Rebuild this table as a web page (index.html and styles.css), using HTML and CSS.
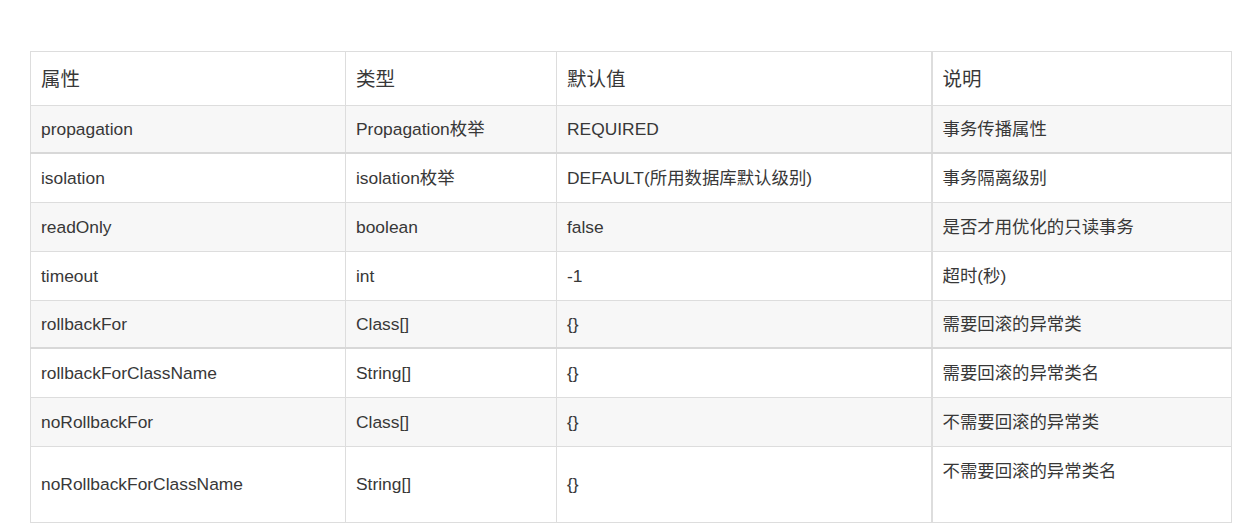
FILE: index.html
```html
<!DOCTYPE html>
<html lang="zh-CN">
<head>
<meta charset="utf-8">
<title>Transactional 属性</title>
<link rel="stylesheet" href="styles.css">
</head>
<body>
<div class="page">
<table class="attr-table">
  <colgroup>
    <col class="c1"><col class="c2"><col class="c3"><col class="c4">
  </colgroup>
  <thead>
    <tr class="head"><th>属性</th><th>类型</th><th>默认值</th><th class="desc">说明</th></tr>
  </thead>
  <tbody>
    <tr class="odd thick"><td>propagation</td><td>Propagation枚举</td><td>REQUIRED</td><td class="desc">事务传播属性</td></tr>
    <tr><td>isolation</td><td>isolation枚举</td><td>DEFAULT(所用数据库默认级别)</td><td class="desc">事务隔离级别</td></tr>
    <tr class="odd"><td>readOnly</td><td>boolean</td><td>false</td><td class="desc">是否才用优化的只读事务</td></tr>
    <tr><td>timeout</td><td>int</td><td>-1</td><td class="desc">超时(秒)</td></tr>
    <tr class="odd thick"><td>rollbackFor</td><td>Class[]</td><td>{}</td><td class="desc">需要回滚的异常类</td></tr>
    <tr><td>rollbackForClassName</td><td>String[]</td><td>{}</td><td class="desc">需要回滚的异常类名</td></tr>
    <tr class="odd"><td>noRollbackFor</td><td>Class[]</td><td>{}</td><td class="desc">不需要回滚的异常类</td></tr>
    <tr class="last"><td>noRollbackForClassName</td><td>String[]</td><td>{}</td><td class="desc">不需要回滚的异常类名<br>&nbsp;</td></tr>
  </tbody>
</table>
</div>
</body>
</html>
```
FILE: styles.css
```css
html, body {
  margin: 0;
  padding: 0;
  background: #ffffff;
}
.page {
  padding: 51px 0 0 30px;
}
.attr-table {
  border-collapse: collapse;
  table-layout: fixed;
  width: 1201px;
  font-family: "Liberation Sans", Arial, "Noto Sans CJK SC", sans-serif;
  font-size: 17.4px;
  line-height: 26px;
  color: #383838;
}
.c1 { width: 315px; }
.c2 { width: 211px; }
.c3 { width: 375px; }
.c4 { width: 300px; }
.attr-table th,
.attr-table td {
  border: 1px solid #dddddd;
  padding: 11px 10px;
  text-align: left;
  font-weight: normal;
  vertical-align: middle;
  white-space: nowrap;
}
.attr-table th {
  padding: 14px 10px 13px;
  font-size: 19.5px;
}
.attr-table .desc {
  border-left: 2px solid #dddddd;
}
.attr-table tr.odd td {
  background: #f7f7f7;
}
.attr-table tr.thick td {
  border-bottom: 2px solid #d8d8d8;
  padding-top: 10px;
  padding-bottom: 10px;
}
.attr-table tr.last td {
  padding: 11px 10px 12px;
}
```
